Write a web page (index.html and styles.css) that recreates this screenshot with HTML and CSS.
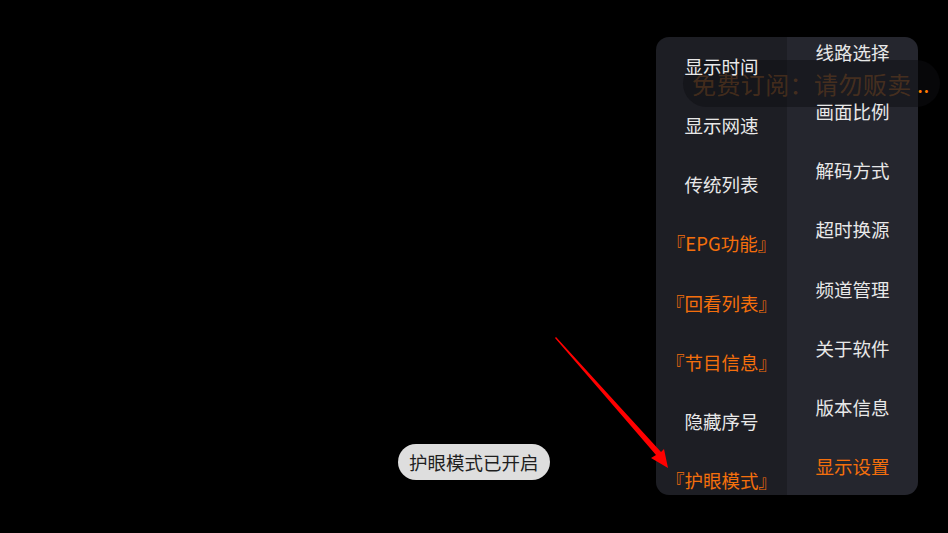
FILE: index.html
```html
<!DOCTYPE html>
<html lang="zh">
<head>
<meta charset="utf-8">
<link rel="stylesheet" href="styles.css">
</head>
<body>
<div class="screen">
  <div class="menu">
    <div class="col col-left">
      <div class="item">显示时间</div>
      <div class="item">显示网速</div>
      <div class="item">传统列表</div>
      <div class="item on">『EPG功能』</div>
      <div class="item on">『回看列表』</div>
      <div class="item on">『节目信息』</div>
      <div class="item">隐藏序号</div>
      <div class="item on">『护眼模式』</div>
    </div>
    <div class="col col-right">
      <div class="item">线路选择</div>
      <div class="item">画面比例</div>
      <div class="item">解码方式</div>
      <div class="item">超时换源</div>
      <div class="item">频道管理</div>
      <div class="item">关于软件</div>
      <div class="item">版本信息</div>
      <div class="item active">显示设置</div>
    </div>
  </div>
  <div class="marquee"><span class="mq-text">免费订阅：请勿贩卖</span><span class="mq-dots">..</span></div>
  <svg class="arrow" width="948" height="533" viewBox="0 0 948 533">
    <polygon fill="#ff0000" points="556,337 661,452 664,449 668,468 651,458 656,455 555,338"/>
  </svg>
  <div class="toast">护眼模式已开启</div>
</div>
</body>
</html>
```
FILE: styles.css
```css
html, body {
  margin: 0;
  padding: 0;
  background: #000;
}
.screen {
  position: relative;
  width: 948px;
  height: 533px;
  overflow: hidden;
  background: #000;
  font-family: "Noto Sans CJK SC", "Noto Sans", sans-serif;
}
.menu {
  position: absolute;
  left: 656px;
  top: 37px;
  width: 262px;
  height: 458px;
  border-radius: 13px;
  overflow: hidden;
  display: flex;
}
.col {
  flex: 1;
  display: flex;
  flex-direction: column;
}
.col-left {
  background: #1d1e24;
}
.col-left .item:first-child {
  margin-top: -1px;
}
.col-right {
  background: #25262e;
}
.col-right .item:first-child {
  margin-top: -15px;
}
.item {
  position: relative;
  z-index: 2;
  flex: 0 0 59.25px;
  display: flex;
  align-items: center;
  justify-content: center;
  font-size: 18.5px;
  color: #e8e8e8;
  white-space: nowrap;
}
.item.on {
  color: #f46f0c;
}
.item.active {
  color: #f46f0c;
}
.marquee {
  position: absolute;
  z-index: 1;
  left: 683px;
  top: 60px;
  width: 257px;
  height: 47px;
  border-radius: 24px;
  background: rgba(14, 14, 17, 0.5);
  display: flex;
  align-items: center;
  padding-left: 9px;
  box-sizing: border-box;
  white-space: nowrap;
  overflow: hidden;
}
.mq-text {
  font-size: 24px;
  color: rgba(140, 80, 30, 0.4);
  letter-spacing: 0.4px;
}
.mq-dots {
  font-size: 16px;
  font-weight: bold;
  color: #ff7a00;
  margin-left: 6px;
  letter-spacing: 1px;
  position: relative;
  top: 2px;
}
.arrow {
  position: absolute;
  z-index: 3;
  left: 0;
  top: 0;
}
.toast {
  position: absolute;
  z-index: 3;
  left: 398px;
  top: 444px;
  height: 36px;
  padding: 0 11px;
  border-radius: 18px;
  background: #dedede;
  color: #1e1e1e;
  font-size: 18.5px;
  display: flex;
  align-items: center;
}
```
